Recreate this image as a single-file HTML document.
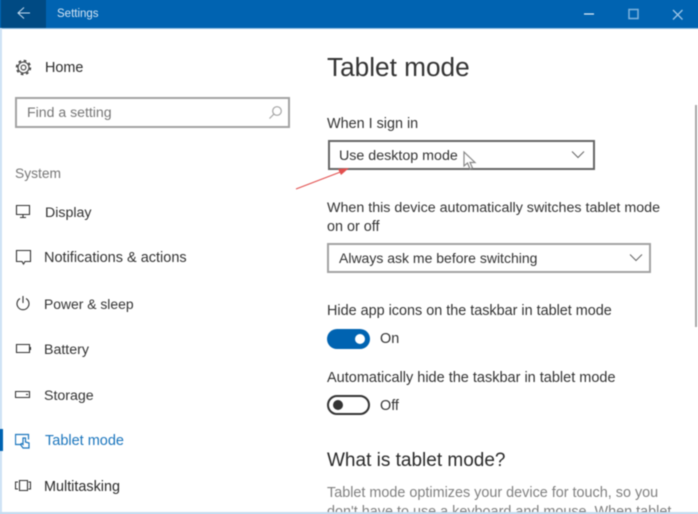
<!DOCTYPE html>
<html><head><meta charset="utf-8"><style>
html,body{margin:0;padding:0;background:#fff}
#o{position:relative;width:698px;height:514px;overflow:hidden;background:#fff}
#r{position:absolute;left:0;top:0;width:698px;height:514px;font-family:"Liberation Sans",sans-serif;filter:blur(.45px)}
#r div,#r svg{position:absolute}
.t{white-space:nowrap;font-size:14.4px;line-height:20px;color:#333}
.i{fill:none;stroke:#333;stroke-width:1.1}
</style></head><body><div id="o"><div id="r">
<div style="left:-6px;top:-6px;width:710px;height:34px;background:#0063b1"></div>
<div style="left:1px;top:-6px;width:45px;height:34px;background:#004a83"></div>
<div style="left:-6px;top:28px;width:710px;height:1px;background:#8fbde3"></div>
<div style="left:-6px;top:28px;width:8px;height:492px;background:#cfe3f5"></div>
<svg style="left:16px;top:6px" width="16" height="16" viewBox="0 0 16 16" fill="none" stroke="#c5dcf0" stroke-width="1"><path d="M14 7H2M8 1.500 2 7l6 5.500"/></svg>
<div class="t" style="left:57px;top:4px;font-size:11.500px;color:#d5e6f5">Settings</div>
<svg style="left:584px;top:6px" width="110" height="18" fill="none"><path d="M0 8H10" stroke="#eaf3fb" stroke-width="1.200"/><path d="M45 3.500h9v9h-9z" stroke="#7fb3de" stroke-width="1.500"/><path d="M89 4 98.500 13.500M98.500 4 89 13.500" stroke="#9cc5e6" stroke-width="1.300"/></svg>

<svg style="left:15px;top:59px" width="17" height="17" viewBox="0 0 17 17" fill="none" stroke="#444"><circle cx="8.500" cy="8.500" r="2.400" stroke-width="1.100"/><circle cx="8.500" cy="8.500" r="5.500" stroke-width="1.100"/><circle cx="8.500" cy="8.500" r="6.900" stroke-width="1.600" stroke-dasharray="2.700 2.720"/></svg>
<div class="t" style="left:45px;top:58px;color:#2a2a2a">Home</div>
<div style="left:15px;top:97px;width:271px;height:27px;border:2px solid #a3a3a3;background:#fff"></div>
<div class="t" style="left:27px;top:102px;color:#777;font-size:14.100px">Find a setting</div>
<svg style="left:268px;top:105px" width="15" height="15" fill="none" stroke="#a5a5a5" stroke-width="1.200"><circle cx="9" cy="6" r="4.300"/><path d="M6 9 1.500 13.500"/></svg>
<div class="t" style="left:15px;top:164px;color:#777;font-size:13.800px">System</div>

<svg class="i" style="left:15px;top:204px" width="16" height="15"><path d="M1.500 1.500h13v9h-13zM8 11v2M5 13.500h6"/></svg>
<div class="t" style="left:45px;top:203px;font-size:14.200px">Display</div>
<svg class="i" style="left:15px;top:249px" width="17" height="17"><path d="M1.500 1.500h14v11H10l-1.500 2.500L7 12.500H1.500z"/></svg>
<div class="t" style="left:44px;top:248px;font-size:14.500px">Notifications &amp; actions</div>
<svg class="i" style="left:15px;top:295px" width="16" height="16"><path d="M5 3.500a6 6 0 1 0 6 0M8 1v7"/></svg>
<div class="t" style="left:44px;top:294px;font-size:13.900px">Power &amp; sleep</div>
<svg class="i" style="left:15px;top:343px" width="17" height="12"><path d="M1.500 1.500h13v8h-13z"/><path d="M15.500 4v3"/></svg>
<div class="t" style="left:44px;top:340px;font-size:14.200px">Battery</div>
<svg class="i" style="left:15px;top:389px" width="16" height="12"><path d="M.5 2.500h14v6H.500z"/><path d="M11 5.500h2"/></svg>
<div class="t" style="left:44px;top:386px;font-size:14.200px">Storage</div>
<div style="left:-6px;top:429px;width:9px;height:22px;background:#0063b1"></div>
<svg style="left:15px;top:432px" width="16" height="17" fill="none" stroke="#1a75bd" stroke-width="1.200"><path d="M6.500 12.500H.5v-10h13v5"/><path d="M8 16 5.500 12.500l1-1 1.500 1V6h2.500v4l3.500 1v5z"/></svg>
<div class="t" style="left:45px;top:431px;color:#1a75bd;font-size:14.500px">Tablet mode</div>
<svg class="i" style="left:15px;top:479px" width="16" height="14"><path d="M4.500 1.500h8v10h-8zM3 3H.5v7H3M13.500 3H15.500v7h-2"/></svg>
<div class="t" style="left:44px;top:477px;color:#2a2a2a">Multitasking</div>

<div class="t" style="left:327px;top:50px;font-size:26.200px;line-height:34px;color:#333">Tablet mode</div>
<div class="t" style="left:327px;top:114px">When I sign in</div>
<div style="left:328px;top:140px;width:263px;height:26px;border:2px solid #666;background:#fff"></div>
<div class="t" style="left:339px;top:146px;font-size:14.250px">Use desktop mode</div>
<svg style="left:571px;top:150px" width="15" height="10" fill="none" stroke="#666" stroke-width="1"><path d="M1 1.500 7 7.500 13 1.500"/></svg>
<svg style="left:462px;top:151px" width="16" height="21"><path d="M2 1v14l3.500-3 2.500 6 2.500-1-2.500-5.500H13z" fill="#fff" stroke="#888" stroke-width="1.200"/></svg>
<svg style="left:295px;top:165px" width="55" height="28" fill="none"><path d="M1 24 48 6" stroke="#e2504f" stroke-width="1.100"/><path d="M54 3 43 4l3 6z" fill="#e2504f"/></svg>
<div class="t" style="left:327px;top:198px;font-size:14.270px">When this device automatically switches tablet mode</div>
<div class="t" style="left:327px;top:217px">on or off</div>
<div style="left:327px;top:243px;width:320px;height:26px;border:2px solid #a3a3a3;background:#fff"></div>
<div class="t" style="left:339px;top:248px;font-size:14px">Always ask me before switching</div>
<svg style="left:629px;top:253px" width="15" height="10" fill="none" stroke="#666" stroke-width="1"><path d="M1 1.500 7 7.500 13 1.500"/></svg>
<div class="t" style="left:327px;top:301px">Hide app icons on the taskbar in tablet mode</div>
<div style="left:327px;top:329px;width:43px;height:20px;border-radius:10px;background:#0063b1"></div>
<div style="left:355px;top:334px;width:10px;height:10px;border-radius:5px;background:#fff"></div>
<div class="t" style="left:380px;top:329px">On</div>
<div class="t" style="left:327px;top:368px;font-size:14.500px">Automatically hide the taskbar in tablet mode</div>
<div style="left:327px;top:395px;width:39px;height:16px;border-radius:10px;border:2px solid #333;background:#fff"></div>
<div style="left:333px;top:400px;width:10px;height:10px;border-radius:5px;background:#333"></div>
<div class="t" style="left:380px;top:396px">Off</div>
<div class="t" style="left:327px;top:449px;font-size:19px;line-height:24px;color:#2a2a2a">What is tablet mode?</div>
<div class="t" style="left:327px;top:483px;color:#808080">Tablet mode optimizes your device for touch, so you</div>
<div class="t" style="left:327px;top:502px;color:#808080">don't have to use a keyboard and mouse. When tablet</div>
<div style="left:-6px;top:512px;width:710px;height:8px;background:#c5dcf0"></div>
<div style="left:695px;top:105px;width:2px;height:222px;background:#a8a8a8"></div>
</div></div></body></html>
